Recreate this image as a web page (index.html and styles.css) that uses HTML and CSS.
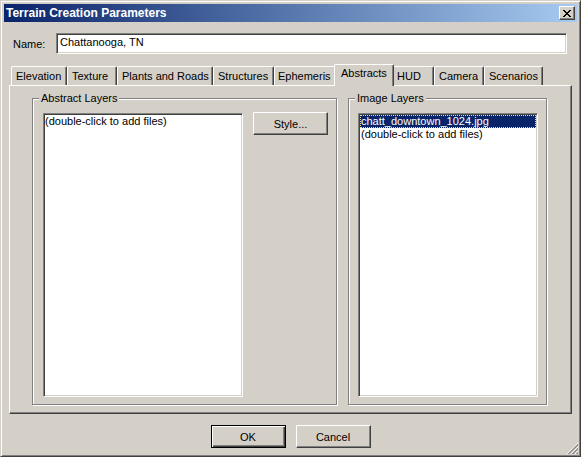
FILE: index.html
```html
<!DOCTYPE html>
<html lang="en">
<head>
    <meta charset="UTF-8">
    <title>Terrain Creation Parameters</title>
    <link rel="stylesheet" href="styles.css">
</head>
<body>
<div class="window">
    <!--title bar-->
    <div class="titlebar">
        <span class="title">Terrain Creation Parameters</span>
        <button class="close">
            <svg width="8" height="7" viewBox="0 0 8 7" shape-rendering="crispEdges">
                <path d="M0 0h2v1h-2zM6 0h2v1h-2zM1 1h2v1h-2zM5 1h2v1h-2zM2 2h4v1h-4zM3 3h2v1h-2zM2 4h4v1h-4zM1 5h2v1h-2zM5 5h2v1h-2zM0 6h2v1h-2zM6 6h2v1h-2z" fill="#000"/>
            </svg>
        </button>
    </div>

    <!--name-->
    <div class="name-row">
        <label class="name-label">Name:</label>
        <div class="field">Chattanooga, TN</div>
    </div>

    <!--tabs-->
    <ul class="tabs">
        <li class="tab tab-elevation">Elevation</li>
        <li class="tab tab-texture">Texture</li>
        <li class="tab tab-plants">Plants and Roads</li>
        <li class="tab tab-structures">Structures</li>
        <li class="tab tab-ephemeris">Ephemeris</li>
        <li class="tab tab-abstracts current">Abstracts</li>
        <li class="tab tab-hud">HUD</li>
        <li class="tab tab-camera">Camera</li>
        <li class="tab tab-scenarios">Scenarios</li>
    </ul>

    <!--tab page-->
    <div class="panel">
        <div class="group group-abstract">
            <span class="group-title">Abstract Layers</span>
            <div class="listbox list-abstract">
                <div class="item">(double-click to add files)</div>
            </div>
            <button class="btn btn-style">Style...</button>
        </div>
        <div class="group group-image">
            <span class="group-title">Image Layers</span>
            <div class="listbox list-image">
                <div class="item selected">chatt_downtown_1024.jpg</div>
                <div class="item">(double-click to add files)</div>
            </div>
        </div>
    </div>

    <!--buttons-->
    <div class="actions">
        <button class="btn btn-default">OK</button>
        <button class="btn">Cancel</button>
    </div>

    <svg class="grip" width="12" height="12" viewBox="0 0 12 12">
        <g stroke-width="0.75">
            <path d="M1 12L12 1" stroke="#fff"/>
            <path d="M2 12L12 2M3 12L12 3" stroke="#808080"/>
            <path d="M5 12L12 5" stroke="#fff"/>
            <path d="M6 12L12 6M7 12L12 7" stroke="#808080"/>
            <path d="M9 12L12 9" stroke="#fff"/>
            <path d="M10 12L12 10M11 12L12 11" stroke="#808080"/>
        </g>
    </svg>
</div>
</body>
</html>
```

FILE: styles.css
```css
*{
    margin: 0;
    padding: 0;
    box-sizing: border-box;
    list-style: none;
}

body{
    width: 581px;
    height: 457px;
    overflow: hidden;
    background: #d4d0c8;
    font-family: "Liberation Sans", Arial, sans-serif;
    font-size: 11px;
    color: #000;
}

.window{
    position: relative;
    width: 581px;
    height: 457px;
    padding: 3px;
    background: #d4d0c8;
    border: 1px solid;
    border-color: #d4d0c8 #404040 #404040 #d4d0c8;
    box-shadow: inset 1px 1px #fff, inset -1px -1px #808080;
}

/* title bar */
.titlebar{
    display: flex;
    align-items: center;
    height: 18px;
    padding: 0 2px 0 2px;
    background: linear-gradient(to right, #0a246a, #a6caf0);
    color: #fff;
    font-weight: bold;
    font-size: 12px;
}
.close{
    display: flex;
    align-items: center;
    justify-content: center;
    margin-left: auto;
    width: 16px;
    height: 14px;
    background: #d4d0c8;
    border: 1px solid;
    border-color: #fff #404040 #404040 #fff;
    box-shadow: inset -1px -1px #808080;
}

/* name field */
.name-row{
    display: flex;
    align-items: center;
    margin-top: 11px;
}
.name-label{
    width: 52px;
    padding-left: 9px;
}
.field{
    width: 511px;
    height: 21px;
    padding-left: 3px;
    line-height: 17px;
    background: #fff;
    border: 1px solid;
    border-color: #808080 #fff #fff #808080;
    box-shadow: inset 1px 1px #404040, inset -1px -1px #d4d0c8;
}

/* tabs */
.tabs{
    display: flex;
    align-items: flex-end;
    height: 21px;
    margin: 10px 0 0 7px;
}
.tab{
    height: 19px;
    padding: 3px 0 0 4px;
    line-height: 13px;
    white-space: nowrap;
    border: 1px solid #fff;
    border-right-color: #404040;
    border-bottom: none;
    border-radius: 2px 2px 0 0;
    box-shadow: inset -1px 0 #808080;
}
.tab.current{
    position: relative;
    z-index: 1;
    height: 22px;
    margin: 0 -2px -1px;
    padding: 2px 0 0 6px;
    background: #d4d0c8;
}
.tab-elevation{ width: 56px; }
.tab-texture{ width: 50px; }
.tab-plants{ width: 96px; }
.tab-structures{ width: 61px; }
.tab-ephemeris{ width: 62px; padding-left: 3px; }
.tab-abstracts{ width: 60px; }
.tab-hud{ width: 42px; }
.tab-camera{ width: 50px; }
.tab-scenarios{ width: 59px; }

/* tab page */
.panel{
    display: flex;
    gap: 11px;
    height: 329px;
    margin: 0 5px;
    padding: 12px 0 0 22px;
    border: 1px solid;
    border-color: #fff #404040 #404040 #fff;
    box-shadow: inset -1px -1px #808080;
}

.group{
    position: relative;
    display: flex;
    align-items: flex-start;
    height: 307px;
    padding: 14px 0 0 10px;
    border: 1px solid #808080;
    box-shadow: inset 1px 1px #fff, 1px 1px #fff;
}
.group-abstract{ width: 305px; }
.group-image{
    width: 199px;
    padding-left: 9px;
}
.group-title{
    position: absolute;
    top: -7px;
    left: 6px;
    padding: 0 2px;
    line-height: 13px;
    background: #d4d0c8;
}

.listbox{
    height: 284px;
    padding: 1px;
    background: #fff;
    border: 1px solid;
    border-color: #808080 #fff #fff #808080;
    box-shadow: inset 1px 1px #404040, inset -1px -1px #d4d0c8;
}
.list-abstract{ width: 200px; }
.list-image{ width: 180px; }
.item{
    padding-left: 1px;
    line-height: 13px;
    white-space: nowrap;
}
.list-abstract .item{ padding-left: 0; }
.item.selected{
    background: #0a246a;
    color: #fff;
    outline: 1px dotted #f5db95;
    outline-offset: -1px;
}

/* buttons */
.btn{
    width: 75px;
    height: 23px;
    font: inherit;
    color: #000;
    background: #d4d0c8;
    border: 1px solid;
    border-color: #fff #404040 #404040 #fff;
    box-shadow: inset -1px -1px #808080;
}
.btn-style{
    margin-left: 10px;
    margin-top: -1px;
}
.btn-default{
    border-color: #000;
    box-shadow: inset 1px 1px #fff, inset -1px -1px #404040, inset -2px -2px #808080;
}
.actions{
    display: flex;
    justify-content: center;
    gap: 10px;
    margin-top: 11px;
}

.grip{
    position: absolute;
    right: 2px;
    bottom: 2px;
}
```
